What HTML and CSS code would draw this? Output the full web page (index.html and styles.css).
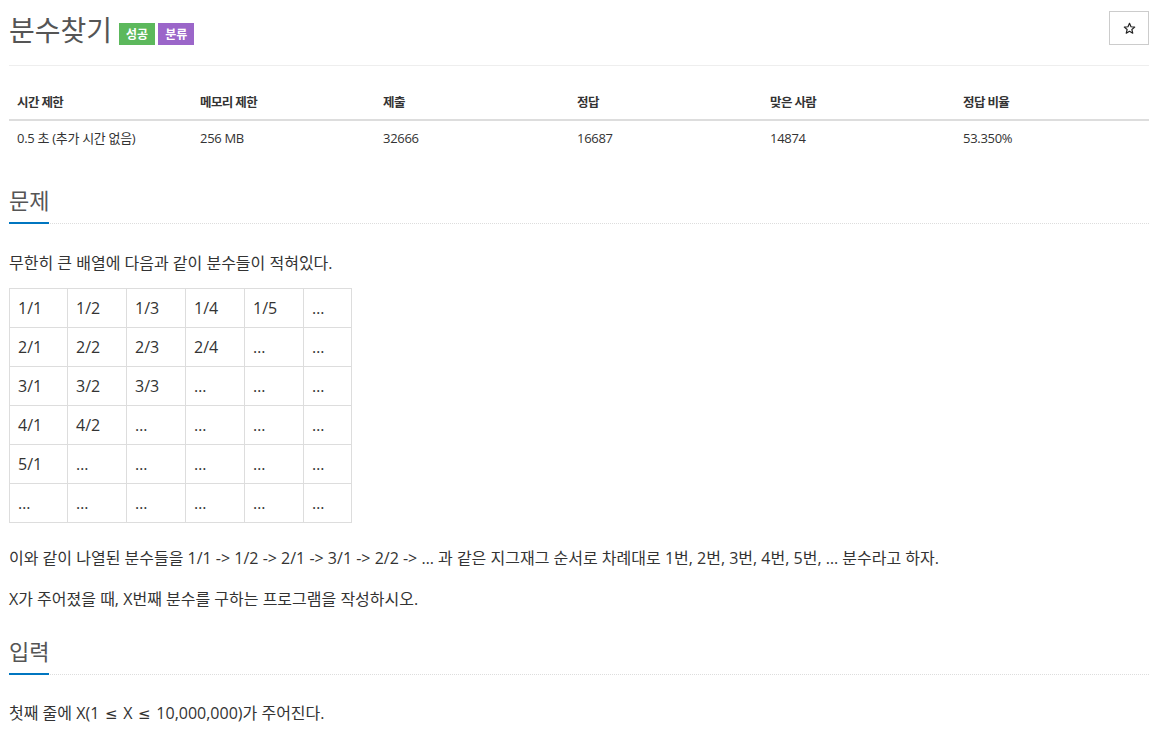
FILE: index.html
```html
<!DOCTYPE html>
<html lang="ko">
<head>
<meta charset="utf-8">
<title>분수찾기</title>
<link rel="stylesheet" href="styles.css">
</head>
<body>
<div class="page">
  <div class="header">
    <div class="title-row">
      <h1 class="title">분수찾기</h1>
      <span class="badge badge-green">성공</span>
      <span class="badge badge-purple">분류</span>
    </div>
    <button class="star-btn" type="button" aria-label="즐겨찾기">
      <svg width="13" height="13" viewBox="0 0 24 24"><path d="M12 2.5l2.8 6.3 6.8.6-5.2 4.5 1.6 6.7L12 17.1l-6 3.5 1.6-6.7-5.2-4.5 6.8-.6z" fill="none" stroke="#222" stroke-width="2.2" stroke-linejoin="round"/></svg>
    </button>
  </div>

  <table class="stats">
    <colgroup><col class="c1"><col class="c2"><col class="c3"><col class="c4"><col class="c5"><col class="c6"></colgroup>
    <thead>
      <tr><th>시간 제한</th><th>메모리 제한</th><th>제출</th><th>정답</th><th>맞은 사람</th><th>정답 비율</th></tr>
    </thead>
    <tbody>
      <tr><td>0.5 초 (추가 시간 없음)</td><td>256 MB</td><td>32666</td><td>16687</td><td>14874</td><td>53.350%</td></tr>
    </tbody>
  </table>

  <div class="sec-title sec-first"><span>문제</span></div>
  <p class="text p1">무한히 큰 배열에 다음과 같이 분수들이 적혀있다.</p>

  <table class="frac">
    <colgroup><col class="f0"><col class="f"><col class="f"><col class="f"><col class="f"><col class="fl"></colgroup>
    <tbody>
      <tr><td>1/1</td><td>1/2</td><td>1/3</td><td>1/4</td><td>1/5</td><td>…</td></tr>
      <tr><td>2/1</td><td>2/2</td><td>2/3</td><td>2/4</td><td>…</td><td>…</td></tr>
      <tr><td>3/1</td><td>3/2</td><td>3/3</td><td>…</td><td>…</td><td>…</td></tr>
      <tr><td>4/1</td><td>4/2</td><td>…</td><td>…</td><td>…</td><td>…</td></tr>
      <tr><td>5/1</td><td>…</td><td>…</td><td>…</td><td>…</td><td>…</td></tr>
      <tr><td>…</td><td>…</td><td>…</td><td>…</td><td>…</td><td>…</td></tr>
    </tbody>
  </table>

  <p class="text p2">이와 같이 나열된 분수들을 1/1 -&gt; 1/2 -&gt; 2/1 -&gt; 3/1 -&gt; 2/2 -&gt; … 과 같은 지그재그 순서로 차례대로 1번, 2번, 3번, 4번, 5번, … 분수라고 하자.</p>
  <p class="text p3">X가 주어졌을 때, X번째 분수를 구하는 프로그램을 작성하시오.</p>

  <div class="sec-title sec-second"><span>입력</span></div>
  <p class="text p4">첫째 줄에 X(1 <span class="rel">≤</span> X <span class="rel">≤</span> 10,000,000)가 주어진다.</p>
</div>
</body>
</html>
```

FILE: styles.css
```css
html, body {
  margin: 0;
  padding: 0;
  background: #fff;
}
body {
  font-family: "Open Sans", "Noto Sans CJK KR", sans-serif;
  color: #333;
  font-size: 16px;
}
.page {
  margin-left: 9px;
  width: 1140px;
}
.header {
  display: flex;
  justify-content: space-between;
  align-items: flex-start;
  padding-top: 11px;
  padding-bottom: 18px;
  border-bottom: 1px solid #eee;
}
.title-row {
  display: flex;
  align-items: center;
}
.title {
  margin: 0;
  font-family: "Noto Sans CJK KR", sans-serif;
  font-weight: 400;
  font-size: 28px;
  line-height: 36px;
  color: #555;
}
.badge {
  display: inline-block;
  height: 22px;
  line-height: 22px;
  padding: 0 7px;
  margin-top: 9px;
  font-family: "Noto Sans CJK KR", sans-serif;
  font-weight: 700;
  font-size: 12px;
  color: #fff;
}
.badge-green {
  background: #5cb85c;
  margin-left: 7px;
}
.badge-purple {
  background: #9b66c9;
  margin-left: 3px;
}
.star-btn {
  width: 40px;
  height: 34px;
  border: 1px solid #ccc;
  background: #fff;
  padding: 0;
  display: flex;
  align-items: center;
  justify-content: center;
}
.stats {
  margin-top: 17px;
  width: 1140px;
  border-collapse: collapse;
  table-layout: fixed;
  font-family: "Open Sans", "Noto Sans CJK KR", sans-serif;
}
.stats .c1, .stats .c2 { width: 183px; }
.stats .c3 { width: 194px; }
.stats .c4, .stats .c5 { width: 193px; }
.stats .c6 { width: 194px; }
.stats th {
  text-align: left;
  font-weight: 700;
  font-size: 12.5px;
  letter-spacing: -0.6px;
  color: #333;
  padding: 10px 8px 6px;
  line-height: 20px;
  border-bottom: 2px solid #ddd;
}
.stats td {
  padding: 7px 8px 8px;
  line-height: 20px;
  font-size: 13px;
  letter-spacing: -0.3px;
  color: #333;
}
.sec-title {
  display: flex;
  border-bottom: 1px dotted #ddd;
}
.sec-title span {
  font-family: "Noto Sans CJK KR", sans-serif;
  font-size: 22px;
  line-height: 30px;
  padding-bottom: 8px;
  color: #555;
  border-bottom: 2px solid #0076c0;
  margin-bottom: -1px;
}
.sec-first { margin-top: 28px; }
.sec-second { margin-top: 24px; }
.text {
  margin: 0;
  line-height: 24px;
  font-size: 16px;
  color: #333;
}
.rel {
  font-family: "DejaVu Sans", sans-serif;
  font-size: 15px;
  margin: 0 1.5px;
}
.p1 { margin-top: 27px; }
.p2 { margin-top: 23px; }
.p3 { margin-top: 17px; }
.p4 { margin-top: 26px; }
.frac {
  margin-top: 13px;
  border-collapse: collapse;
  table-layout: fixed;
  width: 342px;
}
.frac .f0 { width: 58px; }
.frac .f { width: 59px; }
.frac .fl { width: 48px; }
.frac td {
  border: 1px solid #ddd;
  padding: 8px 8px;
  height: 22px;
  line-height: 22px;
  font-size: 16px;
  color: #333;
  white-space: nowrap;
}
```
